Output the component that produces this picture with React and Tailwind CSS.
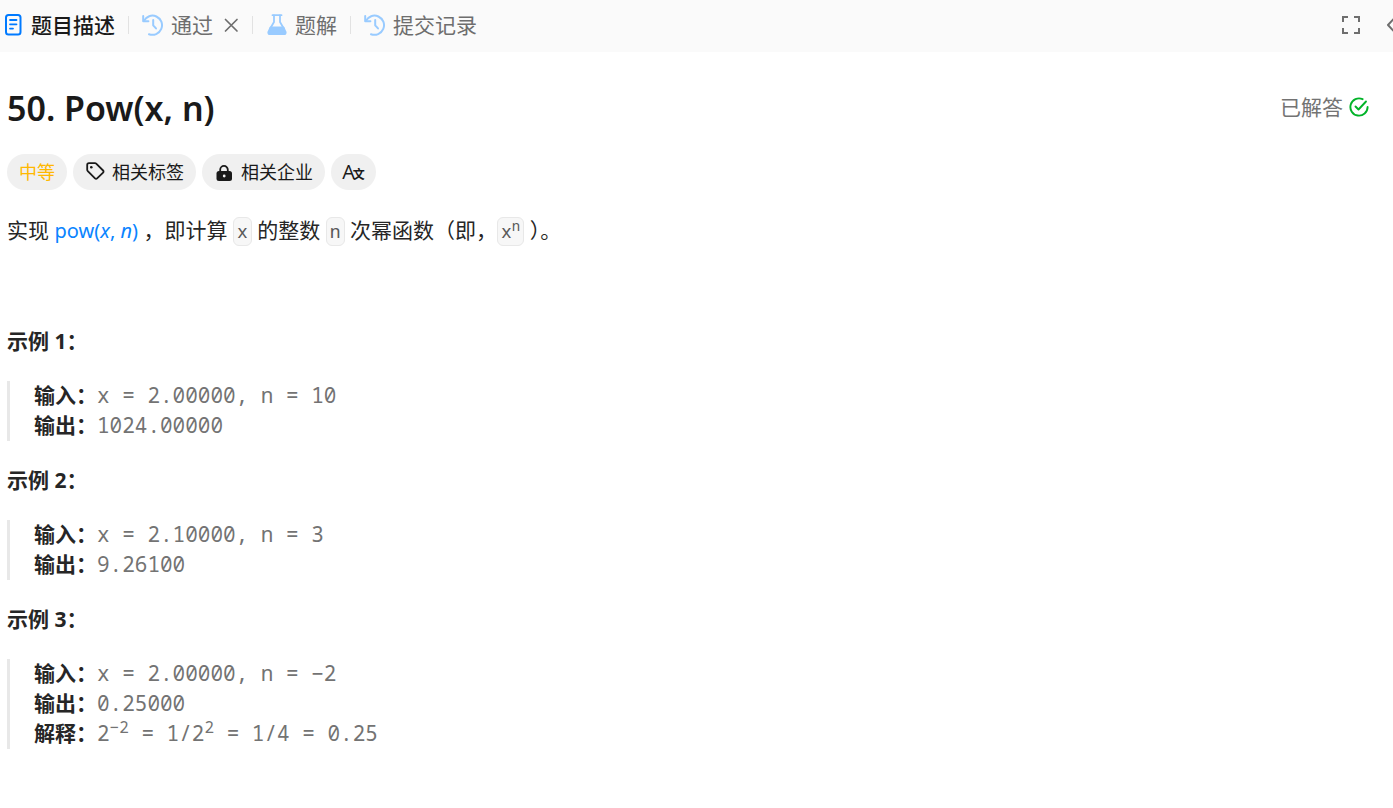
function DocIcon() {
  return (
    <svg className="w-[18px] h-[22px] shrink-0" viewBox="0 0 18 22" fill="none" stroke="#007aff" strokeWidth="2" strokeLinecap="round">
      <rect x="1" y="1" width="14.5" height="19.5" rx="2.5" />
      <path d="M5 6h6.500M5 10.300h6.500M5 14.600h3" strokeWidth="1.800" />
    </svg>
  );
}

function HistoryIcon() {
  return (
    <svg className="w-[22px] h-[22px] shrink-0" viewBox="0 0 22 22" fill="none" stroke="#99cbff" strokeWidth="2" strokeLinecap="round" strokeLinejoin="round">
      <path d="M1.200 2v5.200h5.200" />
      <path d="M1.800 7A9.600 9.600 0 1 1 7 20.200" />
      <path d="M11.200 6v5.400l2.800 3" />
    </svg>
  );
}

function FlaskIcon() {
  return (
    <svg className="w-[22px] h-[22px] shrink-0" viewBox="0 0 22 22" fill="none" stroke="#99cbff" strokeWidth="1.800" strokeLinejoin="round" strokeLinecap="round">
      <path d="M6.500 1.200h9" />
      <path d="M8 1.500v6.500L4.200 14.500M14 1.500v6.500l3.800 6.500" />
      <path d="M4.400 13.500h13.200l1.800 4c.8 1.600 0 2.700-1.500 2.700H4.100c-1.500 0-2.300-1.100-1.500-2.700z" fill="#99cbff" />
    </svg>
  );
}

function TagIcon() {
  return (
    <svg className="w-5 h-5 shrink-0" viewBox="0 0 20 20" fill="none" stroke="#1a1a1a" strokeWidth="1.800" strokeLinejoin="round">
      <path d="M2.200 3v4.700c0 .5.200 1 .6 1.400l7.200 7.300c.6.600 1.500.6 2.100 0l6-5.800c.6-.6.6-1.500 0-2.100L11.200 1.700A1.800 1.800 0 0 0 9.900 1.200H4c-1 0-1.800.8-1.800 1.800z" />
      <circle cx="6.300" cy="5.200" r="1.300" fill="#1a1a1a" stroke="none" />
    </svg>
  );
}

function LockIcon() {
  return (
    <svg className="w-5 h-5 shrink-0" viewBox="0 0 20 20" fill="none">
      <path d="M6.200 10V7.700a3.800 3.800 0 0 1 7.600 0V10" stroke="#1a1a1a" strokeWidth="1.800" />
      <rect x="2.500" y="9" width="15.500" height="10" rx="2.500" fill="#1a1a1a" />
      <circle cx="10.200" cy="14" r="1.400" fill="#efefef" />
    </svg>
  );
}

function SolvedIcon() {
  return (
    <svg className="w-5 h-5 shrink-0" viewBox="0 0 20 20" fill="none" stroke="#01b328" strokeWidth="1.900" strokeLinecap="round" strokeLinejoin="round">
      <path d="M13.600 2.200A8.600 8.600 0 1 0 18.600 10" />
      <path d="M6.500 9.500l3 3 7.500-8" />
    </svg>
  );
}

function Divider() {
  return <span className="w-px h-[18px] bg-[#e2e2e2] shrink-0" />;
}

function Tab({ icon, label, active, closable }) {
  return (
    <div className="flex items-center">
      <button type="button" className={active ? 'flex items-center gap-2 font-medium text-[#1a1a1a]' : 'flex items-center gap-[7px] text-[#6e6e6e]'}>
        {icon}
        {label}
      </button>
      {closable && (
        <button type="button" aria-label="关闭" className="ml-[11px] text-[#6e6e6e]">
          <svg className="w-[15px] h-[15px]" viewBox="0 0 15 15" stroke="currentColor" strokeWidth="1.700" strokeLinecap="round">
            <path d="M1.500 1.500l11.500 11.500M13 1.500l-11.500 11.500" />
          </svg>
        </button>
      )}
    </div>
  );
}

function Pill({ children }) {
  return (
    <button type="button" className="h-9 px-3 rounded-full bg-[#f0f0f0] text-[18px] flex items-center gap-[7px]">
      {children}
    </button>
  );
}

function Code({ children }) {
  return (
    <code className="inline-block h-[29px] leading-[27px] px-[3px] rounded-[6px] border border-[#e8e8e8] bg-[#f7f7f7] text-[18px] text-[#595959] font-['Noto_Sans_Mono','DejaVu_Sans_Mono',monospace]">
      {children}
    </code>
  );
}

const examples = [
  { id: 1, rows: [['输入：', 'x = 2.00000, n = 10'], ['输出：', '1024.00000']] },
  { id: 2, rows: [['输入：', 'x = 2.10000, n = 3'], ['输出：', '9.26100']] },
  {
    id: 3,
    rows: [
      ['输入：', 'x = 2.00000, n = −2'],
      ['输出：', '0.25000'],
      ['解释：', <>2<sup className="text-base leading-none">−2</sup> = 1/2<sup className="text-base leading-none">2</sup> = 1/4 = 0.25</>],
    ],
  },
];

export default function App() {
  return (
    <div className="min-h-screen bg-white overflow-hidden text-[21px] leading-[30px] text-[#262626] font-['Noto_Sans','Noto_Sans_CJK_SC',sans-serif]">
      {/* Tab bar */}
      <header className="h-[52px] pb-[2px] bg-[#fafafa] flex items-center justify-between pl-[5px]">
        <nav className="flex items-center gap-[13px]">
          <Tab icon={<DocIcon />} label="题目描述" active />
          <Divider />
          <Tab icon={<HistoryIcon />} label="通过" closable />
          <Divider />
          <Tab icon={<FlaskIcon />} label="题解" />
          <Divider />
          <Tab icon={<HistoryIcon />} label="提交记录" />
        </nav>
        <div className="flex items-center gap-6 -mr-3">
          <button type="button" aria-label="全屏">
            <svg className="w-5 h-5" viewBox="0 0 20 20" fill="none" stroke="#6e6e6e" strokeWidth="2">
              <path d="M2 7V2h5M13 2h5v5M18 13v5h-5M7 18H2v-5" />
            </svg>
          </button>
          <button type="button" aria-label="收起">
            <svg className="w-5 h-5" viewBox="0 0 20 20" fill="none" stroke="#6e6e6e" strokeWidth="2" strokeLinejoin="round" strokeLinecap="round">
              <path d="M10 2.500L3 10l7 7.500" />
            </svg>
          </button>
        </div>
      </header>

      <main className="pl-[7px] pr-6 pt-8">
        <div className="flex items-start justify-between">
          <h1 className="text-[34px] leading-[48px] font-semibold text-[#1a1a1a]">50. Pow(x, n)</h1>
          <div className="flex items-center gap-[6px] mt-2 text-[#737373]">
            已解答
            <SolvedIcon />
          </div>
        </div>

        <div className="flex gap-[6px] mt-[22px] text-[#1a1a1a]">
          <Pill>
            <span className="text-[#ffb800]">中等</span>
          </Pill>
          <Pill>
            <TagIcon />
            相关标签
          </Pill>
          <Pill>
            <LockIcon />
            相关企业
          </Pill>
          <button type="button" aria-label="翻译" className="h-9 w-[45px] rounded-full bg-[#f0f0f0] flex items-baseline justify-center leading-9">
            <span className="text-[20px] font-['Open_Sans',sans-serif]">A</span>
            <span className="text-[12px] -ml-[2px] font-bold">文</span>
          </button>
        </div>

        <p className="mt-[25px]">
          实现 <a href="#pow" className="text-[20px] text-[#0a84ff]">pow(<em>x</em>, <em>n</em>)</a> ，即计算 <Code>x</Code> 的整数 <Code>n</Code> 次幂函数（即，<Code>x<sup className="text-[14px] leading-none">n</sup></Code> ）。
        </p>

        {/* Examples */}
        <div className="mt-20 flex flex-col gap-6">
          {examples.map((example) => (
            <section key={example.id} className="flex flex-col gap-[25px]">
              <h2 className="font-bold">示例 {example.id}：</h2>
              <div className="border-l-[3px] border-[#e8e8e8] pl-6">
                {example.rows.map(([label, value]) => (
                  <div key={label} className="h-[30px] leading-7 flex text-[#737373] whitespace-pre">
                    <strong className="text-[#262626]">{label}</strong>
                    <span className="font-['Noto_Sans_Mono','DejaVu_Sans_Mono',monospace]">{value}</span>
                  </div>
                ))}
              </div>
            </section>
          ))}
        </div>
      </main>
    </div>
  );
}
